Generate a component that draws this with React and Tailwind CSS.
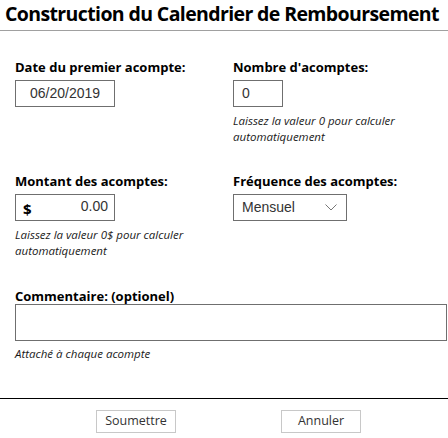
import React from "react";

const seg = { fontFamily: '"Open Sans", "Noto Sans", sans-serif' };

function Label({ children }) {
  return (
    <div className="text-[13px] font-bold leading-[16px] text-black" style={seg}>
      {children}
    </div>
  );
}

function Help({ children }) {
  return (
    <div className="text-[11.5px] italic leading-[16px] text-[#1a1a1a]" style={seg}>
      {children}
    </div>
  );
}

export default function App() {
  return (
    <div className="w-[448px] h-[438px] bg-white overflow-hidden relative">
      <div className="h-[31px] border-b border-[#a0a0a0] pl-[5px]">
        <h1 className="text-[19.5px] font-bold leading-[28px] text-black tracking-[-0.62px] whitespace-nowrap" style={seg}>
          Construction du Calendrier de Remboursement
        </h1>
      </div>

      <div className="pl-[15px] pt-[28px]">
        <div className="flex">
          <div className="w-[218px]">
            <Label>Date du premier acompte:</Label>
            <div className="mt-[5px] w-[100px] h-[27px] border border-[#6f6f6f] flex items-center justify-center text-[14px] text-[#333] font-['Liberation_Sans',Arial,sans-serif]">
              06/20/2019
            </div>
          </div>
          <div>
            <Label>Nombre d'acomptes:</Label>
            <div className="mt-[5px] w-[50px] h-[27px] border border-[#6f6f6f] flex items-center pl-[8px] text-[14px] text-[#333] font-['Liberation_Sans',Arial,sans-serif]">
              0
            </div>
            <div className="mt-[6px]">
              <Help>
                Laissez la valeur 0 pour calculer
                <br />
                automatiquement
              </Help>
            </div>
          </div>
        </div>

        <div className="flex mt-[28px]">
          <div className="w-[218px]">
            <Label>Montant des acomptes:</Label>
            <div className="mt-[5px] w-[100px] h-[27px] border border-[#6f6f6f] flex items-center justify-between pl-[7px] pr-[6px]">
              <span className="text-[15px] font-bold text-black mt-[4px]" style={seg}>$</span>
              <span className="text-[14px] text-[#333] font-['Liberation_Sans',Arial,sans-serif] -mt-[3px]">0.00</span>
            </div>
            <div className="mt-[6px]">
              <Help>
                Laissez la valeur 0$ pour calculer
                <br />
                automatiquement
              </Help>
            </div>
          </div>
          <div>
            <Label>Fréquence des acomptes:</Label>
            <div className="mt-[5px] w-[114px] h-[27px] border border-[#6f6f6f] flex items-center justify-between pl-[8px] pr-[9px]">
              <span className="text-[14px] text-[#333] font-['Liberation_Sans',Arial,sans-serif]">Mensuel</span>
              <svg width="12" height="7" viewBox="0 0 12 7" fill="none">
                <path d="M0.5 0.5 L6 6 L11.5 0.5" stroke="#777" strokeWidth="1" />
              </svg>
            </div>
          </div>
        </div>

        <div className="mt-[29px]">
          <Label>Commentaire: (optionel)</Label>
          <div className="mt-0 w-[432px] h-[37px] border border-[#6f6f6f]" />
          <div className="mt-[5px]">
            <Help>Attaché à chaque acompte</Help>
          </div>
        </div>
      </div>

      <div className="absolute left-0 right-0 top-[398px] border-t border-black" />
      <div className="absolute left-0 right-0 top-[410px] flex">
        <div className="ml-[96px] w-[80px] h-[23px] border border-[#c8c8c8] flex items-center justify-center text-[12.5px] text-[#333]" style={seg}>
          Soumettre
        </div>
        <div className="ml-[105px] w-[80px] h-[23px] border border-[#c8c8c8] flex items-center justify-center text-[12.5px] text-[#333]" style={seg}>
          Annuler
        </div>
      </div>
    </div>
  );
}
